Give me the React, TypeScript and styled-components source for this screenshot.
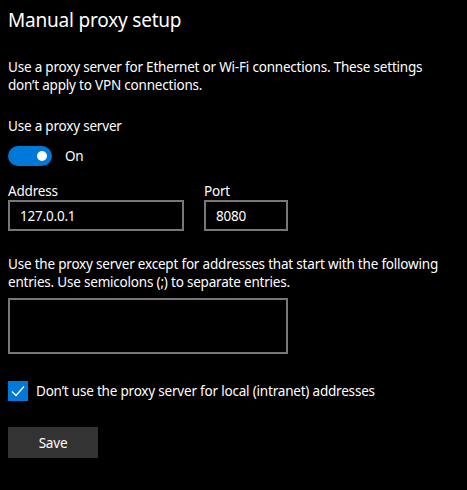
import styled, { createGlobalStyle } from "styled-components";

const Global = createGlobalStyle`
  body {
    margin: 0;
    background: #000;
    color: #fff;
    font-family: "Noto Sans", "Open Sans", sans-serif;
    letter-spacing: -0.2px;
  }
`;

const Page = styled.div`
  display: flex;
  flex-direction: column;
  padding: 6px 8px 0 8px;
  width: 467px;
  height: 490px;
  box-sizing: border-box;
`;

const Title = styled.h1`
  font-size: 19px;
  font-weight: 400;
  margin: 0;
  line-height: 28px;
`;

const Text = styled.p<{ $top?: number }>`
  font-size: 13.5px;
  line-height: 18px;
  margin: ${(p) => p.$top ?? 0}px 0 0 0;
`;

const ToggleRow = styled.div`
  display: flex;
  align-items: center;
  gap: 13px;
  margin-top: 11px;
  font-size: 13.5px;
`;

const Track = styled.div`
  width: 44px;
  height: 20px;
  border-radius: 10px;
  background: #0078d7;
  display: flex;
  align-items: center;
  justify-content: flex-end;
  padding-right: 5px;
  box-sizing: border-box;
`;

const Knob = styled.div`
  width: 10px;
  height: 10px;
  border-radius: 50%;
  background: #fff;
`;

const Fields = styled.div`
  display: flex;
  gap: 20px;
  margin-top: 16px;
`;

const Field = styled.div`
  display: flex;
  flex-direction: column;
  gap: 0;
  font-size: 13.5px;
  line-height: 18px;
`;

const Box = styled.div<{ $w: number; $h: number; $top?: number }>`
  width: ${(p) => p.$w}px;
  height: ${(p) => p.$h}px;
  margin-top: ${(p) => p.$top ?? 0}px;
  border: 2px solid #777;
  box-sizing: border-box;
  padding: 0 10px;
  display: flex;
  align-items: center;
  font-size: 13.5px;
`;

const CheckRow = styled.div`
  display: flex;
  align-items: center;
  gap: 8px;
  margin-top: 27px;
  font-size: 13.5px;
`;

const Check = styled.div`
  width: 20px;
  height: 20px;
  background: #0078d7;
  display: flex;
  align-items: center;
  justify-content: center;
`;

const SaveButton = styled.button`
  margin-top: 26px;
  width: 90px;
  height: 31px;
  background: #333;
  border: none;
  color: #fff;
  font-family: inherit;
  letter-spacing: inherit;
  font-size: 13.5px;
  padding: 0;
`;

export default function App() {
  return (
    <Page>
      <Global />
      <Title>Manual proxy setup</Title>
      <Text $top={24}>
        Use a proxy server for Ethernet or Wi-Fi connections. These settings
        <br />
        don’t apply to VPN connections.
      </Text>
      <Text $top={23}>Use a proxy server</Text>
      <ToggleRow>
        <Track>
          <Knob />
        </Track>
        On
      </ToggleRow>
      <Fields>
        <Field>
          Address
          <Box $w={176} $h={31}>127.0.0.1</Box>
        </Field>
        <Field>
          Port
          <Box $w={84} $h={31}>8080</Box>
        </Field>
      </Fields>
      <Text $top={24}>
        Use the proxy server except for addresses that start with the following
        <br />
        entries. Use semicolons (;) to separate entries.
      </Text>
      <Box $w={280} $h={56} $top={7} />
      <CheckRow>
        <Check>
          <svg width="16" height="16" viewBox="0 0 16 16">
            <path d="M2 8.5 L6 12.5 L14 3.5" fill="none" stroke="#fff" strokeWidth="1.3" />
          </svg>
        </Check>
        Don’t use the proxy server for local (intranet) addresses
      </CheckRow>
      <SaveButton>Save</SaveButton>
    </Page>
  );
}
